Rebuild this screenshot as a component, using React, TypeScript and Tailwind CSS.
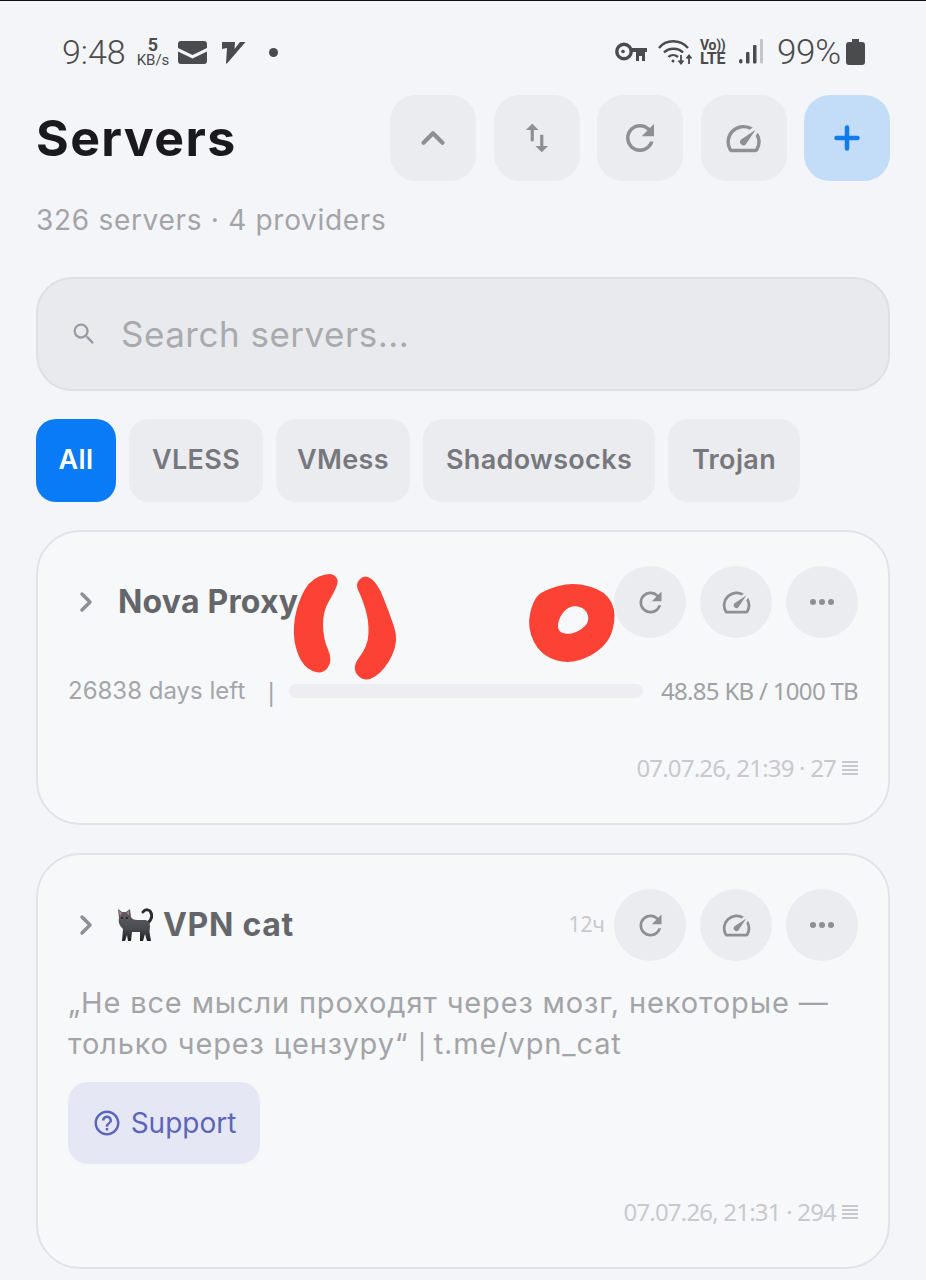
import { ChevronRight, ChevronUp, Plus } from "lucide-react";

const refreshPath = "M17.65 6.35C16.2 4.9 14.21 4 12 4c-4.42 0-7.99 3.58-7.99 8s3.57 8 7.99 8c3.73 0 6.84-2.55 7.73-6h-2.08c-.82 2.33-3.04 4-5.65 4-3.31 0-6-2.69-6-6s2.69-6 6-6c1.66 0 3.14.69 4.22 1.78L13 11h7V4l-2.35 2.35z";
const speedPath = "M20.38 8.57l-1.23 1.85a8 8 0 0 1-.22 7.58H5.07A8 8 0 0 1 15.58 6.85l1.85-1.23A10 10 0 0 0 3.35 19a2 2 0 0 0 1.72 1h13.85a2 2 0 0 0 1.74-1 10 10 0 0 0-.27-10.44zm-9.79 6.84a2 2 0 0 0 2.83 0l5.66-8.49-8.49 5.66a2 2 0 0 0 0 2.83z";
const swapPath = "M16 17.01V10h-2v7.01h-3L15 21l4-3.99h-3zM9 3L5 6.99h3V14h2V6.99h3L9 3z";
const helpPath = "M11 18h2v-2h-2v2zm1-16C6.48 2 2 6.48 2 12s4.48 10 10 10 10-4.48 10-10S17.52 2 12 2zm0 18c-4.41 0-8-3.59-8-8s3.59-8 8-8 8 3.59 8 8-3.59 8-8 8zm0-14c-2.21 0-4 1.79-4 4h2c0-1.1.9-2 2-2s2 .9 2 2c0 2-3 1.75-3 5h2c0-2.25 3-2.5 3-5 0-2.21-1.79-4-4-4z";
const searchPath = "M15.5 14h-.79l-.28-.27A6.47 6.47 0 0 0 16 9.5 6.5 6.5 0 1 0 9.5 16c1.61 0 3.09-.59 4.23-1.57l.27.28v.79l5 4.99L20.49 19l-4.99-5zm-6 0C7.01 14 5 11.99 5 9.5S7.01 5 9.5 5 14 7.01 14 9.5 11.99 14 9.5 14z";

function Mi({ d, className }: { d: string; className: string }) {
  return (
    <svg viewBox="0 0 24 24" fill="currentColor" className={className}>
      <path d={d} />
    </svg>
  );
}

// closed blob through the midpoints of the given points
function blob(pts: number[][]) {
  const mid = (a: number[], b: number[]) => `${(a[0] + b[0]) / 2} ${(a[1] + b[1]) / 2}`;
  let d = `M${mid(pts[pts.length - 1], pts[0])}`;
  pts.forEach((p, i) => {
    d += `Q${p[0]} ${p[1]} ${mid(p, pts[(i + 1) % pts.length])}`;
  });
  return d + "Z";
}

function StatusBar() {
  return (
    <div className="flex items-center justify-between h-[34px] mt-[34px] pl-[62px] pr-[61px] text-[#4a4b4d] font-['Roboto',sans-serif]">
      <div className="flex items-center">
        <span className="text-[34px] font-light leading-none w-[75px]">9:48</span>
        <div className="flex flex-col items-center w-[32px]">
          <span className="text-[18px] font-bold h-[16px] leading-[16px]">5</span>
          <span className="text-[15px] h-[14px] leading-[14px]">KB/s</span>
        </div>
        <svg viewBox="0 0 29 23" className="w-[29px] h-[23px] ml-[9px]" fill="currentColor">
          <path d="M3 0h23a3 3 0 0 1 3 3v4L14.500 14 0 7V3a3 3 0 0 1 3-3zM0 10.500l14.500 7 14.500-7V20a3 3 0 0 1-3 3H3a3 3 0 0 1-3-3z" />
        </svg>
        <svg viewBox="0 0 25 23" className="w-[25px] h-[23px] ml-[14px]" fill="currentColor">
          <path d="M1 1H14L13.500 8 19 1H24.500L6 22.500H5L6 7 1 8Z" />
        </svg>
        <span className="w-[9px] h-[9px] rounded-full bg-current ml-[23px]" />
      </div>
      <div className="flex items-center">
        <svg viewBox="0 0 32 20" className="w-[32px] h-[20px]" fill="none" stroke="currentColor">
          <circle cx="9" cy="9.500" r="7.200" strokeWidth="3.400" />
          <circle cx="8" cy="9.500" r="1.800" fill="currentColor" stroke="none" />
          <path d="M16 6h16v4h-2v9h-3v-5h-3v5h-3v-9h-5z" fill="currentColor" stroke="none" />
        </svg>
        <svg viewBox="0 0 35 26" className="w-[35px] h-[26px] ml-[11px]" fill="none" stroke="currentColor" strokeWidth="2.400">
          <path d="M1 9C8 0 22 0 30 9" />
          <path d="M6 13.500c5-5 14-5 19 0" />
          <path d="M10.500 18c2.500-2.500 6.500-2.500 9.500 0" />
          <circle cx="15" cy="22" r="1.500" fill="currentColor" stroke="none" />
          <path d="M23 16v8.500M20.500 21.500l2.500 3 2.500-3M31 25v-8.500M28.500 19.500l2.500-3 2.500 3" strokeWidth="1.800" />
        </svg>
        <div className="flex flex-col ml-[7px] w-[27px] font-bold">
          <span className="text-[14px] leading-[13px] h-[13px] tracking-[-0.3px]">Vo))</span>
          <span className="text-[16px] leading-[14px] tracking-[-0.2px]">LTE</span>
        </div>
        <svg viewBox="0 0 24 26" className="w-[24px] h-[26px] ml-[12px]" fill="currentColor">
          <rect x="0" y="20" width="3.500" height="4.500" rx="1.700" />
          <rect x="7" y="13" width="3.500" height="11.500" rx="1" />
          <rect x="14" y="6" width="3.500" height="18.500" rx="1" />
          <rect x="21" y="0" width="3" height="24.500" rx="1" fill="#c3c5c9" />
        </svg>
        <span className="text-[35px] font-light leading-none ml-[14px] w-[64px] tracking-[-0.3px]">99%</span>
        <svg viewBox="0 0 19 26" className="w-[19px] h-[26px] ml-[5px]" fill="currentColor">
          <path d="M6 0h7v3h3a3 3 0 0 1 3 3v17a3 3 0 0 1-3 3H3a3 3 0 0 1-3-3V6a3 3 0 0 1 3-3h3z" />
        </svg>
      </div>
    </div>
  );
}

function HeaderButton({ children, blue }: { children: React.ReactNode; blue?: boolean }) {
  return (
    <button className={`w-[86px] h-[86px] rounded-[26px] flex items-center justify-center ${blue ? "bg-[#c3ddf8] text-[#0f7bec]" : "bg-[#ebecf0] text-[#8e8e93]"}`}>
      {children}
    </button>
  );
}

function CircleButton({ children }: { children: React.ReactNode }) {
  return (
    <button className="w-[72px] h-[72px] rounded-full bg-[#ebecef] text-[#8e8e93] flex items-center justify-center">
      {children}
    </button>
  );
}

function CardActions() {
  return (
    <div className="flex gap-[14px] ml-auto">
      <CircleButton><Mi d={refreshPath} className="w-[33px] h-[33px]" /></CircleButton>
      <CircleButton><Mi d={speedPath} className="w-[33px] h-[33px]" /></CircleButton>
      <CircleButton>
        <span className="flex gap-[3px]">
          <i className="w-[6px] h-[6px] rounded-full bg-current" />
          <i className="w-[6px] h-[6px] rounded-full bg-current" />
          <i className="w-[6px] h-[6px] rounded-full bg-current" />
        </span>
      </CircleButton>
    </div>
  );
}

function Stamp({ text }: { text: string }) {
  return (
    <div className="flex items-center justify-end gap-[6px] text-[#c8c9cd] font-['Noto_Sans',sans-serif] text-[24px] leading-none tracking-[-0.8px]">
      <span>{text}</span>
      <span className="flex flex-col gap-[2px] w-[16px]">
        <i className="h-[2px] bg-current" />
        <i className="h-[2px] bg-current" />
        <i className="h-[2px] bg-current" />
        <i className="h-[2px] bg-current" />
      </span>
    </div>
  );
}

function CatIcon() {
  return (
    <svg viewBox="0 0 36 34" className="w-[36px] h-[34px] mr-[10px] shrink-0">
      <defs>
        <linearGradient id="catFur" x1="0" y1="0" x2="0" y2="1">
          <stop offset="0" stopColor="#5f6066" />
          <stop offset="0.6" stopColor="#4b4c51" />
          <stop offset="1" stopColor="#1f1f22" />
        </linearGradient>
      </defs>
      <path d="M31 15C35 11 35 7 34 5C33 1 28 1 26 4" fill="none" stroke="#2c2d30" strokeWidth="3" strokeLinecap="round" />
      <path d="M1 1L5 4H9L13 1L14 9C15 11 17 12 20 12H28C31 12 33 15 33 18C33 21 32 23 33 27L34 33H30L28 26 26 33H23L23 24H15L14 33H11L10 27 8 33H5L6 21C3 18 1 15 2 10Z" fill="url(#catFur)" />
      <path d="M2 3L5 5 3 8Z" fill="#c97a80" />
      <path d="M12 3L9.500 5 12 7Z" fill="#c97a80" />
      <circle cx="5" cy="10" r="1" fill="#1b1b1d" />
      <circle cx="10" cy="10" r="1" fill="#1b1b1d" />
    </svg>
  );
}

function Scribble() {
  const left = [[339, 578], [330, 571], [308, 580], [295, 610], [293, 640], [303, 666], [322, 674], [333, 660], [323, 637], [323, 610], [335, 590]];
  const right = [[365, 573], [355, 583], [362, 597], [369, 620], [368, 645], [351, 667], [365, 682], [385, 669], [399, 640], [389, 611], [378, 583]];
  const outer = [[544, 589], [573, 581], [606, 590], [617, 613], [608, 645], [573, 664], [541, 655], [527, 627], [533, 599]];
  const inner = [[570, 604], [586, 607], [590, 622], [573, 634], [557, 631], [559, 616]];
  return (
    <svg viewBox="0 0 926 1280" className="absolute inset-0 w-[926px] h-[1280px] pointer-events-none">
      <path fill="#fb4234" d={blob(left)} />
      <path fill="#fb4234" d={blob(right)} />
      <path fill="#fb4234" fillRule="evenodd" d={blob(outer) + blob(inner)} />
    </svg>
  );
}

export default function App() {
  return (
    <div className="relative w-[926px] h-[1280px] overflow-hidden bg-[#f4f5f8] border-t border-[#111] font-['Inter',sans-serif]">
      <StatusBar />

      <div className="flex items-center mt-[26px] px-[36px]">
        <h1 className="text-[50px] font-bold text-[#1a1a1c] leading-none tracking-[1.4px]">Servers</h1>
        <div className="flex gap-[17.5px] ml-auto">
          <HeaderButton><ChevronUp size={38} strokeWidth={2.600} /></HeaderButton>
          <HeaderButton><Mi d={swapPath} className="w-[38px] h-[38px]" /></HeaderButton>
          <HeaderButton><Mi d={refreshPath} className="w-[42px] h-[42px]" /></HeaderButton>
          <HeaderButton><Mi d={speedPath} className="w-[41px] h-[41px]" /></HeaderButton>
          <HeaderButton blue><Plus size={36} strokeWidth={3} /></HeaderButton>
        </div>
      </div>

      <p className="mt-[21px] px-[36px] text-[28px] leading-[36px] text-[#a3a4a8] tracking-[0.7px]">326 servers · 4 providers</p>

      <div className="mx-[36px] mt-[39px] h-[114px] rounded-[36px] bg-[#e9eaee] border-2 border-[#dfe0e4] flex items-center pl-[32px]">
        <Mi d={searchPath} className="w-[28px] h-[28px] text-[#9a9ba0]" />
        <span className="ml-[23px] text-[35px] text-[#a9aaae] tracking-[0.5px]">Search servers...</span>
      </div>

      <div className="flex gap-[13px] mt-[28px] px-[36px] text-[27px] font-semibold text-[#77787d] tracking-[0.35px]">
        <div className="w-[80px] h-[83px] rounded-[20px] bg-[#0a7bf6] text-white flex items-center justify-center">All</div>
        <div className="w-[134px] h-[83px] rounded-[20px] bg-[#ebecf0] flex items-center justify-center">VLESS</div>
        <div className="w-[134px] h-[83px] rounded-[20px] bg-[#ebecf0] flex items-center justify-center">VMess</div>
        <div className="w-[232px] h-[83px] rounded-[20px] bg-[#ebecf0] flex items-center justify-center">Shadowsocks</div>
        <div className="w-[132px] h-[83px] rounded-[20px] bg-[#ebecf0] flex items-center justify-center">Trojan</div>
      </div>

      <div className="mx-[36px] mt-[28px] h-[295px] rounded-[44px] bg-[#f7f8fa] border-2 border-[#e2e3e6] pt-[34px] px-[30px]">
        <div className="flex items-center h-[72px]">
          <ChevronRight size={32} strokeWidth={2.600} className="text-[#8e8e93] ml-[2px]" />
          <span className="ml-[16px] text-[32px] font-bold text-[#65666a] leading-none tracking-[0.2px]">Nova Proxy</span>
          <CardActions />
        </div>
        <div className="flex items-center mt-[35px] h-[36px] text-[#a5a6aa]">
          <span className="text-[24px] w-[196px] whitespace-nowrap">26838 days left</span>
          <span className="w-[25px] text-[26px] leading-none font-['Noto_Sans',sans-serif]">|</span>
          <div className="h-[14px] w-[354px] rounded-full bg-[#ededf2]" />
          <span className="ml-auto text-[#a0a1a5] font-['Noto_Sans',sans-serif] text-[24px] tracking-[-0.7px] whitespace-nowrap">48.85 KB / 1000 TB</span>
        </div>
        <div className="mt-[47px]"><Stamp text="07.07.26, 21:39 · 27" /></div>
      </div>

      <div className="mx-[36px] mt-[28px] h-[416px] rounded-[44px] bg-[#f7f8fa] border-2 border-[#e2e3e6] pt-[34px] px-[30px]">
        <div className="flex items-center h-[72px]">
          <ChevronRight size={32} strokeWidth={2.600} className="text-[#8e8e93] ml-[2px] mr-[15px]" />
          <CatIcon />
          <span className="text-[32px] font-bold text-[#65666a] leading-none tracking-[0.7px]">VPN cat</span>
          <span className="ml-auto mr-[9px] text-[#c8c9cd] font-['Noto_Sans',sans-serif] text-[21px]">12ч</span>
          <div className="ml-0"><CardActions /></div>
        </div>
        <p className="mt-[22px] text-[29px] leading-[40px] text-[#a3a4a8] whitespace-nowrap tracking-[0.85px]">
          „Не все мысли проходят через мозг, некоторые —<br />только через цензуру“<span className="font-['Noto_Sans',sans-serif] tracking-[-1.9px]"> | </span>t.me/vpn_cat
        </p>
        <div className="mt-[18px] w-[192px] h-[82px] rounded-[20px] bg-[#e5e7f5] text-[#5c65b8] flex items-center justify-center gap-[9px]">
          <Mi d={helpPath} className="w-[30px] h-[30px]" />
          <span className="text-[28px]">Support</span>
        </div>
        <div className="mt-[36px]"><Stamp text="07.07.26, 21:31 · 294" /></div>
      </div>

      <Scribble />
    </div>
  );
}
